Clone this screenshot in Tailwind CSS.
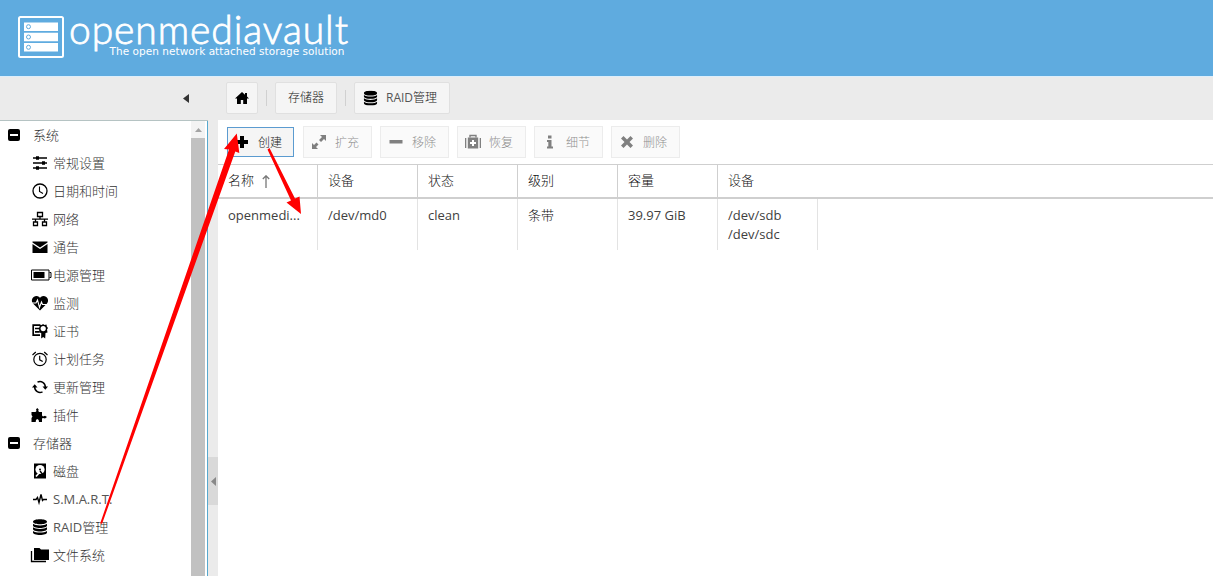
<!DOCTYPE html>
<html lang="zh-CN">
<head>
  <meta charset="UTF-8">
  <meta name="viewport" content="width=device-width, initial-scale=1.0">
  <title>openmediavault</title>
  <script src="https://cdn.jsdelivr.net/npm/@tailwindcss/browser@4"></script>
</head>
<body class="relative flex flex-col h-screen overflow-hidden bg-white text-[13px] text-[#404040] font-['Open_Sans','Noto_Sans_CJK_SC',sans-serif]">

  <header class="h-[76px] shrink-0 bg-[#5fabdf] pl-[17px] pt-[15px]">
    <svg class="block overflow-visible" width="334" height="46" viewBox="17 15 334 46" fill="#fff">
      <rect x="19" y="17" width="44" height="40" rx="1.5" fill="none" stroke="#fff" stroke-width="2"/>
      <path d="M24 22.500h34v8.500h-34zM24 32.800h34v8.500h-34zM24 43h34v8.500h-34z"/>
      <g fill="none" stroke="#5fabdf" stroke-width="1">
        <circle cx="28.500" cy="26.700" r="2"/><circle cx="28.500" cy="37" r="2"/><circle cx="28.500" cy="47.300" r="2"/>
      </g>
      <text x="69" y="44" textLength="279" class="font-['Lato'] font-light text-[39px]" stroke="#fff" stroke-width=".8">openmediavault</text>
      <text x="109.500" y="55" textLength="235" class="font-['DejaVu_Sans'] text-[10.500px]">The open network attached storage solution</text>
    </svg>
  </header>

  <div class="flex flex-1 min-h-0 bg-[#ebebeb] border-t border-[#dceefb]">
    <aside class="w-[208px] shrink-0 flex flex-col">
      <div class="h-[43px] shrink-0 flex items-center justify-end pr-[19px]">
        <svg width="6" height="9" viewBox="0 0 6 9" fill="#333"><path d="M6 0v9L0 4.500z"/></svg>
      </div>
      <div class="h-px shrink-0 bg-[#b5c3c3]"></div>
      <div class="flex flex-1 min-h-0 bg-white">
        <ul id="tree" class="flex-1 min-w-0 font-light overflow-hidden text-[#333]"></ul>
        <div class="w-[14px] mr-0.5 bg-[#c1c1c1] flex flex-col">
          <div class="h-[17px] bg-[#f3f3f3] flex items-center justify-center">
            <svg width="7" height="4" viewBox="0 0 7 4" fill="#a3a3a3"><path d="M0 4h7L3.500 0z"/></svg>
          </div>
        </div>
        <div class="w-px bg-[#57a9cf]"></div>
      </div>
    </aside>

    <div class="w-[10px] shrink-0 pt-[380px]">
      <div class="h-[48px] bg-[#d9d9d9] flex items-center justify-center">
        <svg width="5" height="9" viewBox="0 0 5 9" fill="#888"><path d="M5 0v9L0 4.500z"/></svg>
      </div>
    </div>

    <main class="flex-1 min-w-0 flex flex-col">
      <nav class="h-[43px] shrink-0 flex items-start pt-[5px] pl-2 text-xs">
        <div class="w-8 h-8 bg-[#f5f5f5] border border-[#e0e0e0] rounded-xs flex items-center justify-center">
          <svg width="14" height="12" viewBox="0 0 14 12" fill="#000"><path d="M7 0L0 6.500h2V12h3.800V8h2.400v4H12V6.500h2l-2-1.900V1H10v1.800z"/></svg>
        </div>
        <div class="w-px h-4 mt-2 mx-2 bg-[#d0d0d0]"></div>
        <div class="w-[62px] h-8 bg-[#f5f5f5] border border-[#e0e0e0] rounded-xs flex items-center justify-center font-light text-[#222]">存储器</div>
        <div class="w-px h-4 mt-2 mx-2 bg-[#d0d0d0]"></div>
        <div class="w-24 h-8 bg-[#f5f5f5] border border-[#e0e0e0] rounded-xs flex items-center pl-2 gap-2">
          <svg width="15" height="16" viewBox="0 0 16 16" fill="#000"><use href="#i-db"/></svg>
          <span class="text-[#555]">RAID<span class="font-light text-[#222]">管理</span></span>
        </div>
      </nav>

      <div class="flex-1 bg-white">
        <div id="toolbar" class="h-11 flex items-center pl-2 gap-2 text-xs font-light"></div>
        <div class="flex border-t border-t-[#cfcfcf] border-b-2 border-b-[#cfcfcf] h-[35px] text-[#111] font-light">
          <div class="w-[100px] border-r border-[#cfcfcf] flex items-center pl-2.5 gap-2">名称
            <svg width="8" height="13" viewBox="0 0 8 13" fill="none" stroke="#777" stroke-width="1.300"><path d="M4 13V1M.800 4L4 .800 7.200 4"/></svg>
          </div>
          <div class="w-[100px] border-r border-[#cfcfcf] flex items-center pl-2.5">设备</div>
          <div class="w-[100px] border-r border-[#cfcfcf] flex items-center pl-2.5">状态</div>
          <div class="w-[100px] border-r border-[#cfcfcf] flex items-center pl-2.5">级别</div>
          <div class="w-[100px] border-r border-[#cfcfcf] flex items-center pl-2.5">容量</div>
          <div class="flex items-center pl-2.5">设备</div>
        </div>
        <div class="flex h-[51px] leading-[19px]">
          <div class="w-[100px] border-r border-[#e3e3e3] pl-2.5 pt-[7px]">openmedi...</div>
          <div class="w-[100px] border-r border-[#e3e3e3] pl-2.5 pt-[7px]">/dev/md0</div>
          <div class="w-[100px] border-r border-[#e3e3e3] pl-2.5 pt-[7px]">clean</div>
          <div class="w-[100px] border-r border-[#e3e3e3] pl-2.5 pt-[7px] font-light text-[#111]">条带</div>
          <div class="w-[100px] border-r border-[#e3e3e3] pl-2.5 pt-[7px]">39.97 GiB</div>
          <div class="w-[100px] border-r border-[#e3e3e3] pl-2.5 pt-[7px]">/dev/sdb<br>/dev/sdc</div>
        </div>
      </div>
    </main>
  </div>

  <!-- annotation arrows -->
  <svg class="absolute inset-0 pointer-events-none" width="1213" height="576" fill="#f00">
    <path d="M100.300 523L229 149.500l-5-.5L236.800 133.500l2.500 19.500-4-1.500L102 524z"/>
    <path d="M267.500 149.500l2-1.500 25.500 50.500 4.500-2L301 214l-14.500-11.500 4.500-2z"/>
  </svg>

  <!-- icon sprite -->
  <svg class="hidden">
    <symbol id="i-db" viewBox="0 0 16 16"><path d="M1 2.800C1 1.200 4 .300 8 .300s7 .900 7 2.500S12 5.300 8 5.300 1 4.400 1 2.800zM1 4.700c1.500 1.200 4 1.700 7 1.700s5.500-.500 7-1.700v1.700C15 7.900 12 8.900 8 8.900S1 7.900 1 6.400zM1 8.300C2.500 9.500 5 10 8 10s5.500-.500 7-1.700V10c0 1.500-3 2.500-7 2.500S1 11.500 1 10zM1 11.900c1.500 1.200 4 1.700 7 1.700s5.500-.500 7-1.700v1.600c0 1.500-3 2.500-7 2.500s-7-1-7-2.500z"/></symbol>
  </svg>

  <script>
    const S = 'fill="none" stroke="currentColor"';
    const icons = {
      sliders: `<path d="M1 3h14M1 8h14M1 13h14" ${S} stroke-width="1.300"/><path d="M4 1.300h3v3.400H4zM10 6.300h3v3.400h-3zM4 11.300h3v3.400H4z"/>`,
      clock: `<circle cx="8" cy="8" r="7" ${S} stroke-width="1.300"/><path d="M7.500 3.500v5l3.500 2" ${S} stroke-width="1.100"/>`,
      net: `<path d="M5.500 1.500h5v4h-5zM1.500 11h4v3.500h-4zM10.500 11h4v3.500h-4zM8 5.500v2.700M3.500 11V8.200h9V11M0 8.200h16" ${S} stroke-width="1.300"/>`,
      mail: `<path d="M.500 3.500v-1h15v1L8 8.500zM.500 5L8 10l7.500-5v9H.500z"/>`,
      battery: `<path d="M-.500 3H17v10H-.500zM17.500 5.500h1.500v5h-1.500" ${S}/><path d="M1.500 5h11v6h-11z"/>`,
      heart: `<path d="M8 15.500L1 8.500C-2.500 4 3-1.500 7.300 2L8 3l.700-1C13-1.500 18.500 4 15 8.500z"/><path d="M0 8h4l1.500-3 2 7.500 2-5.500 1 2.500H16" ${S} class="text-white" stroke-width="1.100"/>`,
      cert: `<path d="M8 2.200H1.200v10H8M3 5.500h4M3 8.800h4" ${S} stroke-width="1.700"/><path d="M11 1l1.500 1 2-.500.300 2 1.200 1.500-1 1.500.500 3-2 .500-.300 5.500-2-1.500-2 1.500V10L7 9.500l.300-2.500L6.500 5.500 7.500 4l.300-2.500 2 .500z"/><circle cx="11.200" cy="5.600" r="2.600" fill="#fff"/>`,
      alarm: `<circle cx="8" cy="8.500" r="6.200" ${S} stroke-width="1.200"/><path d="M7.700 4.800v4l3 1.800M.500 4L3.800 1M15.500 4l-3.300-3" ${S} stroke-width="1.200"/>`,
      sync: `<path d="M5.500 3.200A5.300 5.300 0 0 1 13.300 8M10.500 12.800A5.300 5.300 0 0 1 2.700 8" ${S} stroke-width="1.500"/><path d="M0 8.500h5.500L2.700 5.300zM10.500 7.500H16l-2.700 3.200z"/>`,
      plugin: `<path d="M-.500 5h4L4.500 4 4 2.500 5.200 1l1.500 1.500L6.200 4l1 1H10v3.500l1 1 2-.800L15 10l-2 1.500-2-.500-1 .500V15H7l-.300-2-1.500-1-1.200 1-.300 2H-.500v-4l1-1.500L-.500 8z"/>`,
      disk: `<path d="M2 .500h12v15H2z"/><circle cx="8" cy="6.500" r="4.600" fill="#fff"/><circle cx="8" cy="6.500" r="1"/><path d="M4 13.500l3.500-4" stroke="#fff" stroke-width="1.600"/><path d="M8 8l3.500 4.500" ${S} stroke-width="1.300"/>`,
      pulse: `<path d="M1 8.500h3l1.500-2 1.500 5 2-8 1.500 6 1-1H15" ${S} stroke-width="1.400"/>`,
      db: `<use href="#i-db"/>`,
      folder: `<path d="M-.500 4v10.500H14" ${S} stroke-width="1.300"/><path d="M2 1h5.500L9 2.500h8v10.500H2z"/>`,
      plus: `<path d="M6 2h4v4h4v4h-4v4H6v-4H2V6h4z"/>`,
      expand: `<path d="M9 1h6v6l-2-2-3 3-2-2 3-3zM7 15H1V9l2 2 2.500-2.500 2 2L5 13z"/>`,
      minus: `<path d="M1.500 6h13v3.500h-13z"/>`,
      kit: `<path d="M0 4h1.300v10H0zM14.700 4H16v10h-1.300zM2.800 3.500h10.400v11H2.800z"/><path d="M5 3.500v-2h6v2" ${S} stroke-width="1.400"/><path d="M7 6h2v2h2v2H9v2H7v-2H5V8h2z" fill="#fff"/>`,
      info: `<path d="M6 1.500h3.500v3H6zM5 6h4.500v6.500H11v2H5v-2h1.300V8H5z"/>`,
      cross: `<path d="M4.500 2L8 5.500 11.500 2 14 4.500 10.500 8l3.500 3.500-2.500 2.500L8 10.500 4.500 14 2 11.500 5.500 8 2 4.500z"/>`
    };
    const svg = name => `<svg class="overflow-visible shrink-0" width="16" height="16" viewBox="0 0 16 16" fill="currentColor">${icons[name]}</svg>`;
    // latin runs need the regular cut next to the light CJK one
    const text = s => s.replace(/[A-Z.]+/g, m => `<span class="font-normal text-[#555]">${m}</span>`);

    const tree = [
      ['系统'], ['常规设置', 'sliders'], ['日期和时间', 'clock'], ['网络', 'net'], ['通告', 'mail'],
      ['电源管理', 'battery'], ['监测', 'heart'], ['证书', 'cert'], ['计划任务', 'alarm'],
      ['更新管理', 'sync'], ['插件', 'plugin'],
      ['存储器'], ['磁盘', 'disk'], ['S.M.A.R.T.', 'pulse'], ['RAID管理', 'db'], ['文件系统', 'folder']
    ];
    document.getElementById('tree').innerHTML = tree.map(([label, icon]) => icon
      ? `<li class="h-7 flex items-center pl-8 gap-[5px]"><span class="text-black">${svg(icon)}</span><span class="pt-px">${text(label)}</span></li>`
      : `<li class="h-7 flex items-center pl-2 gap-[13px]"><span class="w-3 h-3 rounded-xs bg-black flex items-center justify-center"><i class="w-2 h-0.5 bg-white"></i></span><span class="pt-px">${label}</span></li>`
    ).join('');

    const buttons = [
      ['创建', 'plus'], ['扩充', 'expand'], ['移除', 'minus'], ['恢复', 'kit'], ['细节', 'info'], ['删除', 'cross']
    ];
    document.getElementById('toolbar').innerHTML = buttons.map(([label, icon], i) => i === 0
      ? `<div class="w-[67px] h-[30px] mx-px border border-[#5b9bd0] bg-[#f5f5f5] flex items-center pl-1.5 gap-2 text-black">${svg(icon)}<span class="text-[#222] pt-px">${label}</span></div>`
      : `<div class="w-[69px] h-8 border border-[#ececec] bg-[#fafafa] flex items-center pl-[7px] gap-2 text-[#808080]">${svg(icon)}<span class="text-[#909090] pt-px">${label}</span></div>`
    ).join('');
  </script>
</body>
</html>
